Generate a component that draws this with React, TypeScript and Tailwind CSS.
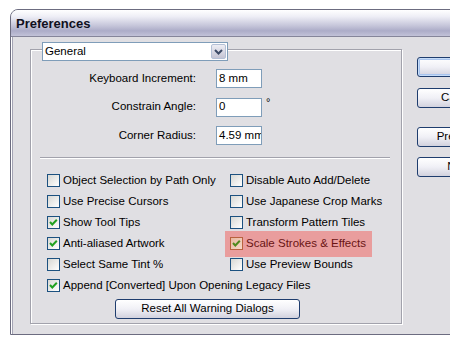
import React from "react";

const rows: [string, boolean, string, boolean][] = [
  ["Object Selection by Path Only", false, "Disable Auto Add/Delete", false],
  ["Use Precise Cursors", false, "Use Japanese Crop Marks", false],
  ["Show Tool Tips", true, "Transform Pattern Tiles", false],
  ["Anti-aliased Artwork", true, "Scale Strokes & Effects", true],
  ["Select Same Tint %", false, "Use Preview Bounds", false],
];

function CheckBox({ checked, hot }: { checked: boolean; hot?: boolean }) {
  return (
    <span
      className={
        "flex h-[13px] w-[13px] shrink-0 items-center justify-center border " +
        (hot
          ? "border-[#b8623e] bg-gradient-to-br from-[#e8b8a0] to-[#f6d8c8]"
          : "border-[#1c5180] bg-gradient-to-br from-[#d8d8d4] to-white")
      }
    >
      {checked && (
        <svg width="11" height="11" viewBox="0 0 11 11">
          <path
            d="M2 5 L4.3 7.5 L8.8 2.8"
            fill="none"
            stroke={hot ? "#4f8a1e" : "#21a121"}
            strokeWidth="2"
          />
        </svg>
      )}
    </span>
  );
}

function Option({
  label,
  checked,
  hot,
}: {
  label: string;
  checked: boolean;
  hot?: boolean;
}) {
  if (hot) {
    return (
      <div className="-my-[2.5px] -ml-[5px] flex h-[26px] w-[147px] items-center gap-[3px] bg-[#e99d9d] pl-[5px] text-[#6a1414]">
        <CheckBox checked={checked} hot />
        <span className="whitespace-nowrap">{label}</span>
      </div>
    );
  }
  return (
    <div className="flex h-[21px] items-center gap-[3px]">
      <CheckBox checked={checked} />
      <span className="whitespace-nowrap">{label}</span>
    </div>
  );
}

function Field({ label, value, unit }: { label: string; value: string; unit?: string }) {
  return (
    <div className="flex h-[19px] items-center">
      <span className="w-[165px] text-right">{label}</span>
      <div className="ml-[20px] flex h-[19px] w-[46px] items-center overflow-hidden border border-[#7f9db9] bg-white pl-[2px] whitespace-nowrap">
        {value}
      </div>
      {unit && <span className="mb-[9px] ml-[4px] text-[11px]">{unit}</span>}
    </div>
  );
}

function SideButton({ text, primary, className }: { text: string; primary?: boolean; className: string }) {
  return (
    <div
      className={
        "flex h-[20px] w-[84px] items-center justify-center rounded-[3px] border border-[#1f3d6e] bg-gradient-to-b from-white via-[#f0f0f6] to-[#d2d2de] " +
        (primary ? "shadow-[inset_0_0_0_1px_#c6dcf8,inset_0_0_0_2px_#a8c4ee] " : "") +
        className
      }
    >
      {text}
    </div>
  );
}

export default function App() {
  return (
    <div className="h-[346px] w-[450px] overflow-hidden bg-white pl-[10px] pt-[9px] font-['Liberation_Sans',Arial,sans-serif] text-[11.5px] leading-none text-black">
      <div className="h-[326px] w-[520px] overflow-hidden rounded-tl-[8px] border border-[#6c6c80] bg-[#e0dfe3]">
        {/* title bar */}
        <div className="flex h-[27px] items-center border-b border-[#85859a] bg-[linear-gradient(to_bottom,#ffffff_0%,#eeeef6_25%,#c6c6da_60%,#acacc8_80%,#c2c2d8_100%)] pl-[5px] pt-[1px] text-[13px] font-bold text-[#101020]">
          Preferences
        </div>

        {/* body */}
        <div className="flex h-[297px] items-start gap-[15px] pl-[19px] pt-[12px] shadow-[inset_1px_0_0_#ffffff,inset_2px_0_0_#a4a4b4]">
          {/* group box */}
          <div className="flex h-[275px] w-[372px] shrink-0 flex-col border border-[#a2a2ac] shadow-[inset_1px_1px_0_#ffffff,1px_1px_0_#ffffff]">
            <div className="-mt-[8px] ml-[11px] flex h-[19px] w-[186px] border border-[#7f9db9] bg-white">
              <div className="flex flex-1 items-center pl-[2px]">General</div>
              <div className="m-[1px] flex w-[15px] items-center justify-center rounded-[2px] border border-[#b4c0d6] bg-gradient-to-b from-[#eeeef4] to-[#c4c4d4]">
                <svg width="9" height="6" viewBox="0 0 9 6">
                  <path d="M1 1 L4.5 4.5 L8 1" fill="none" stroke="#3c4a66" strokeWidth="2" />
                </svg>
              </div>
            </div>

            <div className="mt-[8px] flex flex-col gap-[9.5px]">
              <Field label="Keyboard Increment:" value="8 mm" />
              <Field label="Constrain Angle:" value="0" unit="°" />
              <Field label="Corner Radius:" value="4.59 mm" />
            </div>

            <div className="mr-[11px] ml-[9px] mt-[12px] border-t border-[#a2a2ac] shadow-[0_1px_0_#ffffff]" />

            <div className="mt-[12px] flex flex-col pl-[16px]">
              {rows.map(([a, ac, b, bc]) => (
                <div key={a} className="flex">
                  <div className="w-[183px]">
                    <Option label={a} checked={ac} />
                  </div>
                  <Option label={b} checked={bc} hot={b === "Scale Strokes & Effects"} />
                </div>
              ))}
              <Option label="Append [Converted] Upon Opening Legacy Files" checked />
            </div>

            <div className="ml-[84px] mt-[3px] flex h-[20px] w-[185px] items-center justify-center rounded-[3px] border border-[#1f3d6e] bg-gradient-to-b from-white via-[#f0f0f6] to-[#d2d2de]">
              Reset All Warning Dialogs
            </div>
          </div>

          {/* right buttons */}
          <div className="flex flex-col">
            <SideButton text="OK" primary className="mt-[8px]" />
            <SideButton text="Cancel" className="mt-[11px]" />
            <SideButton text="Previous" className="mt-[19px]" />
            <SideButton text="Next" className="mt-[10px]" />
          </div>
        </div>
      </div>
    </div>
  );
}
